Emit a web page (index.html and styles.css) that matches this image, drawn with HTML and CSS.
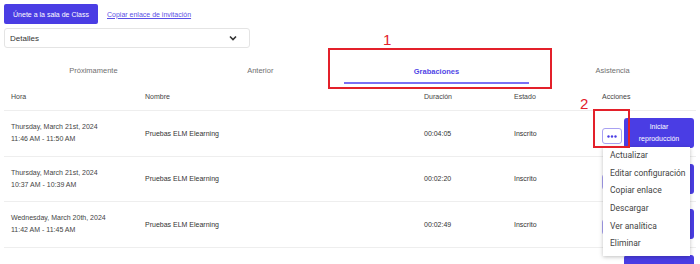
FILE: index.html
```html
<!DOCTYPE html>
<html lang="es">
<head>
    <meta charset="utf-8">
    <title>Grabaciones</title>
    <link rel="stylesheet" href="styles.css">
</head>
<body>
    <div class="topbar">
        <button class="join">Únete a la sala de Class</button>
        <a class="invite" href="#">Copiar enlace de invitación</a>
    </div>
    <div class="select">
        <span>Detalles</span>
        <svg width="8" height="6" viewBox="0 0 8 6"><path d="M1 1.5 L4 4.5 L7 1.5" fill="none" stroke="#333" stroke-width="1.6"/></svg>
    </div>

    <nav class="tabs">
        <div class="tab">Próximamente</div>
        <div class="tab">Anterior</div>
        <div class="tab active"><span>Grabaciones</span></div>
        <div class="tab">Asistencia</div>
    </nav>

    <div class="table">
        <div class="row head">
            <div>Hora</div>
            <div>Nombre</div>
            <div>Duración</div>
            <div>Estado</div>
            <div>Acciones</div>
        </div>
        <div class="row">
            <div class="when">Thursday, March 21st, 2024<br>11:46 AM - 11:50 AM</div>
            <div>Pruebas ELM Elearning</div>
            <div>00:04:05</div>
            <div>Inscrito</div>
            <div class="actions">
                <button class="more"><svg width="10" height="3" viewBox="0 0 10 3"><circle cx="1.5" cy="1.5" r="1.2"/><circle cx="5" cy="1.5" r="1.2"/><circle cx="8.5" cy="1.5" r="1.2"/></svg></button>
                <button class="play">Iniciar<br>reproducción</button>
            </div>
        </div>
        <div class="row">
            <div class="when">Thursday, March 21st, 2024<br>10:37 AM - 10:39 AM</div>
            <div>Pruebas ELM Elearning</div>
            <div>00:02:20</div>
            <div>Inscrito</div>
            <div class="actions">
                <button class="more"><svg width="10" height="3" viewBox="0 0 10 3"><circle cx="1.5" cy="1.5" r="1.2"/><circle cx="5" cy="1.5" r="1.2"/><circle cx="8.5" cy="1.5" r="1.2"/></svg></button>
                <button class="play">Iniciar<br>reproducción</button>
            </div>
        </div>
        <div class="row">
            <div class="when">Wednesday, March 20th, 2024<br>11:42 AM - 11:45 AM</div>
            <div>Pruebas ELM Elearning</div>
            <div>00:02:49</div>
            <div>Inscrito</div>
            <div class="actions">
                <button class="more"><svg width="10" height="3" viewBox="0 0 10 3"><circle cx="1.5" cy="1.5" r="1.2"/><circle cx="5" cy="1.5" r="1.2"/><circle cx="8.5" cy="1.5" r="1.2"/></svg></button>
                <button class="play">Iniciar<br>reproducción</button>
            </div>
        </div>
        <div class="row tail">
            <div></div>
            <div></div>
            <div></div>
            <div></div>
            <div class="actions">
                <span class="gap"></span>
                <span class="play"></span>
            </div>
        </div>
    </div>

    <ul class="menu">
        <li>Actualizar</li>
        <li>Editar configuración</li>
        <li>Copiar enlace</li>
        <li>Descargar</li>
        <li>Ver analítica</li>
        <li>Eliminar</li>
    </ul>

    <!-- marcas de la captura -->
    <div class="mark mark-1"></div>
    <span class="num num-1">1</span>
    <div class="mark mark-2"></div>
    <span class="num num-2">2</span>
</body>
</html>
```

FILE: styles.css
```css
body {
    margin: 0;
    padding: 4px 4px 0;
    font-family: "Liberation Sans", Arial, sans-serif;
    color: #333;
    background: #fff;
    overflow: hidden;
    height: 264px;
    box-sizing: border-box;
}
.topbar {
    display: flex;
    align-items: center;
    gap: 9px;
    height: 20px;
}
.join {
    width: 94px;
    height: 20px;
    border: none;
    border-radius: 2px;
    background: #4a3de4;
    color: #fff;
    font-family: inherit;
    font-size: 7px;
    padding: 0;
}
.invite {
    color: #5a4fe6;
    font-size: 7px;
}
.select {
    margin-top: 4px;
    width: 246px;
    height: 20px;
    box-sizing: border-box;
    border: 1px solid #e4e4e4;
    border-radius: 3px;
    padding: 0 12px 0 5px;
    display: flex;
    align-items: center;
    justify-content: space-between;
    font-size: 8px;
    color: #333;
}
.tabs {
    display: grid;
    grid-template-columns: repeat(4, 1fr);
    margin-left: 6px;
    height: 40px;
}
.tab {
    display: flex;
    align-items: center;
    justify-content: center;
    font-size: 7.5px;
    color: #6f6f6f;
    padding-top: 4px;
}
.tab.active span {
    color: #5146e6;
    font-weight: bold;
    padding: 1px 70px 6px;
    border-bottom: 2px solid #7a70f4;
    margin-top: 9px;
}
.table {
    font-size: 7px;
}
.row {
    display: grid;
    grid-template-columns: 134px 279px 90px 88px 1fr;
    align-items: center;
    padding-left: 7px;
    height: 45.5px;
    box-sizing: border-box;
    border-bottom: 1px solid #eee;
}
.row.head {
    height: 23px;
    color: #444;
    align-items: start;
    padding-top: 5px;
}
.row.tail {
    border-bottom: none;
    align-items: start;
    padding-top: 7px;
}
.when {
    line-height: 12px;
    color: #444;
}
.actions {
    display: flex;
    align-items: center;
    gap: 2px;
}
.gap {
    width: 20px;
}
.more {
    width: 20px;
    height: 16px;
    margin-top: 6px;
    border: 1px solid #a8a1f2;
    border-radius: 3px;
    background: #fff;
    padding: 0;
    display: flex;
    align-items: center;
    justify-content: center;
    fill: #4a3de4;
}
.play {
    display: block;
    width: 70px;
    height: 30px;
    border: none;
    border-radius: 3px;
    background: #4a3de4;
    color: #fff;
    font-family: inherit;
    font-size: 7px;
    line-height: 12px;
    padding: 0;
}
.menu {
    position: absolute;
    left: 603px;
    top: 147px;
    width: 87px;
    height: 109px;
    margin: 0;
    padding: 0;
    list-style: none;
    background: #fff;
    box-shadow: 0 1px 4px rgba(0, 0, 0, 0.25);
    font-family: Roboto, sans-serif;
    font-size: 8.5px;
    color: #444;
}
.menu li {
    height: 17.7px;
    line-height: 17.7px;
    padding-left: 7px;
}
.mark {
    position: absolute;
    border: 2px solid #e3202a;
}
.mark-1 {
    left: 328px;
    top: 48px;
    width: 220px;
    height: 37px;
}
.mark-2 {
    left: 593px;
    top: 109px;
    width: 33px;
    height: 35px;
}
.num {
    position: absolute;
    color: #e3202a;
    font-family: "Liberation Sans", sans-serif;
    font-size: 15px;
    line-height: 15px;
}
.num-1 {
    left: 383px;
    top: 32px;
}
.num-2 {
    left: 580px;
    top: 96px;
}
```
